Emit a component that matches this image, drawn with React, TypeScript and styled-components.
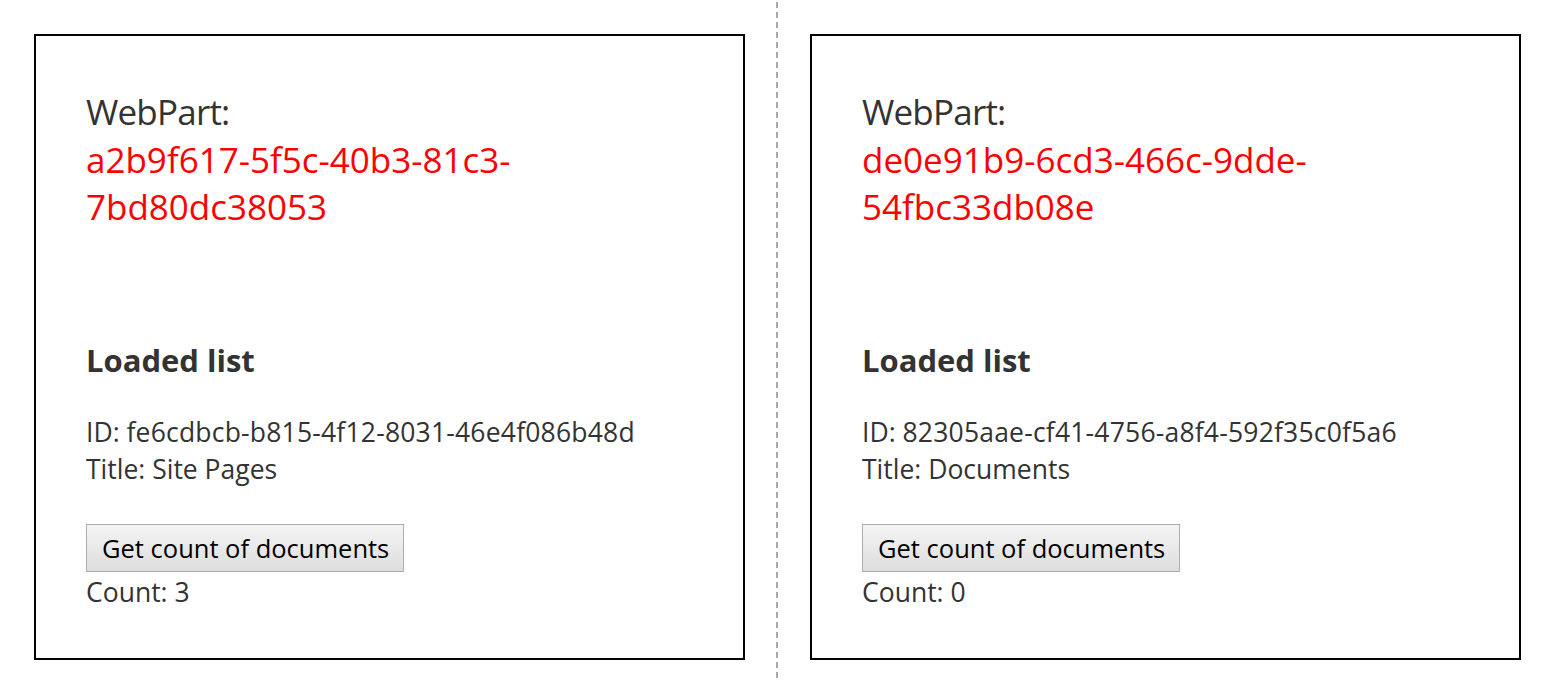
import React from "react";
import styled, { createGlobalStyle } from "styled-components";

const Global = createGlobalStyle`
  html, body { margin: 0; padding: 0; background: #ffffff; }
  body { font-family: "Open Sans", "Noto Sans", sans-serif; color: #333333; }
`;

const Page = styled.div`
  display: flex;
  height: 681px;
  overflow: hidden;
`;

const Column = styled.div<{ $left: number; $right: number }>`
  padding: 34px ${(p) => p.$right}px 0 ${(p) => p.$left}px;
`;

const Divider = styled.div`
  width: 2px;
  height: 681px;
  background: repeating-linear-gradient(
    to bottom,
    transparent 0,
    transparent 2px,
    #a9a9a9 2px,
    #a9a9a9 8px,
    transparent 8px,
    transparent 10px
  );
`;

const Card = styled.div`
  box-sizing: border-box;
  width: 711px;
  height: 626px;
  border: 2px solid #000000;
  padding: 52px 51px 0 50px;
`;

const Heading = styled.div`
  font-size: 35px;
  line-height: 47.5px;
  color: #333333;
`;

const Label = styled.span`
  letter-spacing: -0.8px;
`;

const Guid = styled.div`
  color: #ff0000;
`;

const SubHeading = styled.div`
  margin-top: 110px;
  font-size: 31px;
  line-height: 39px;
  font-weight: 700;
  color: #333333;
`;

const Info = styled.div`
  margin-top: 34px;
  font-size: 26.5px;
  line-height: 37px;
`;

const IdValue = styled.span`
  letter-spacing: 0.2px;
`;

const Button = styled.button`
  display: block;
  margin-top: 36px;
  box-sizing: border-box;
  height: 48px;
  padding: 0 14px 0 15px;
  border: 1px solid #adadad;
  border-radius: 0;
  background: linear-gradient(#f4f4f4, #dddddd);
  font-family: inherit;
  font-size: 25.5px;
  color: #000000;
`;

const Count = styled.div`
  margin-top: 2px;
  font-size: 26.5px;
  line-height: 37px;
`;

type PartProps = { part: string; listId: string; title: string; count: number };

function WebPart({ part, listId, title, count }: PartProps) {
  return (
    <Card>
      <Heading>
        <Label>WebPart:</Label>
        <Guid>{part}</Guid>
      </Heading>
      <SubHeading>Loaded list</SubHeading>
      <Info>
        ID: <IdValue>{listId}</IdValue>
        <br />
        Title: {title}
      </Info>
      <Button>Get count of documents</Button>
      <Count>Count: {count}</Count>
    </Card>
  );
}

export default function App() {
  return (
    <>
      <Global />
      <Page>
        <Column $left={34} $right={31}>
          <WebPart
            part="a2b9f617-5f5c-40b3-81c3-7bd80dc38053"
            listId="fe6cdbcb-b815-4f12-8031-46e4f086b48d"
            title="Site Pages"
            count={3}
          />
        </Column>
        <Divider />
        <Column $left={32} $right={0}>
          <WebPart
            part="de0e91b9-6cd3-466c-9dde-54fbc33db08e"
            listId="82305aae-cf41-4756-a8f4-592f35c0f5a6"
            title="Documents"
            count={0}
          />
        </Column>
      </Page>
    </>
  );
}
